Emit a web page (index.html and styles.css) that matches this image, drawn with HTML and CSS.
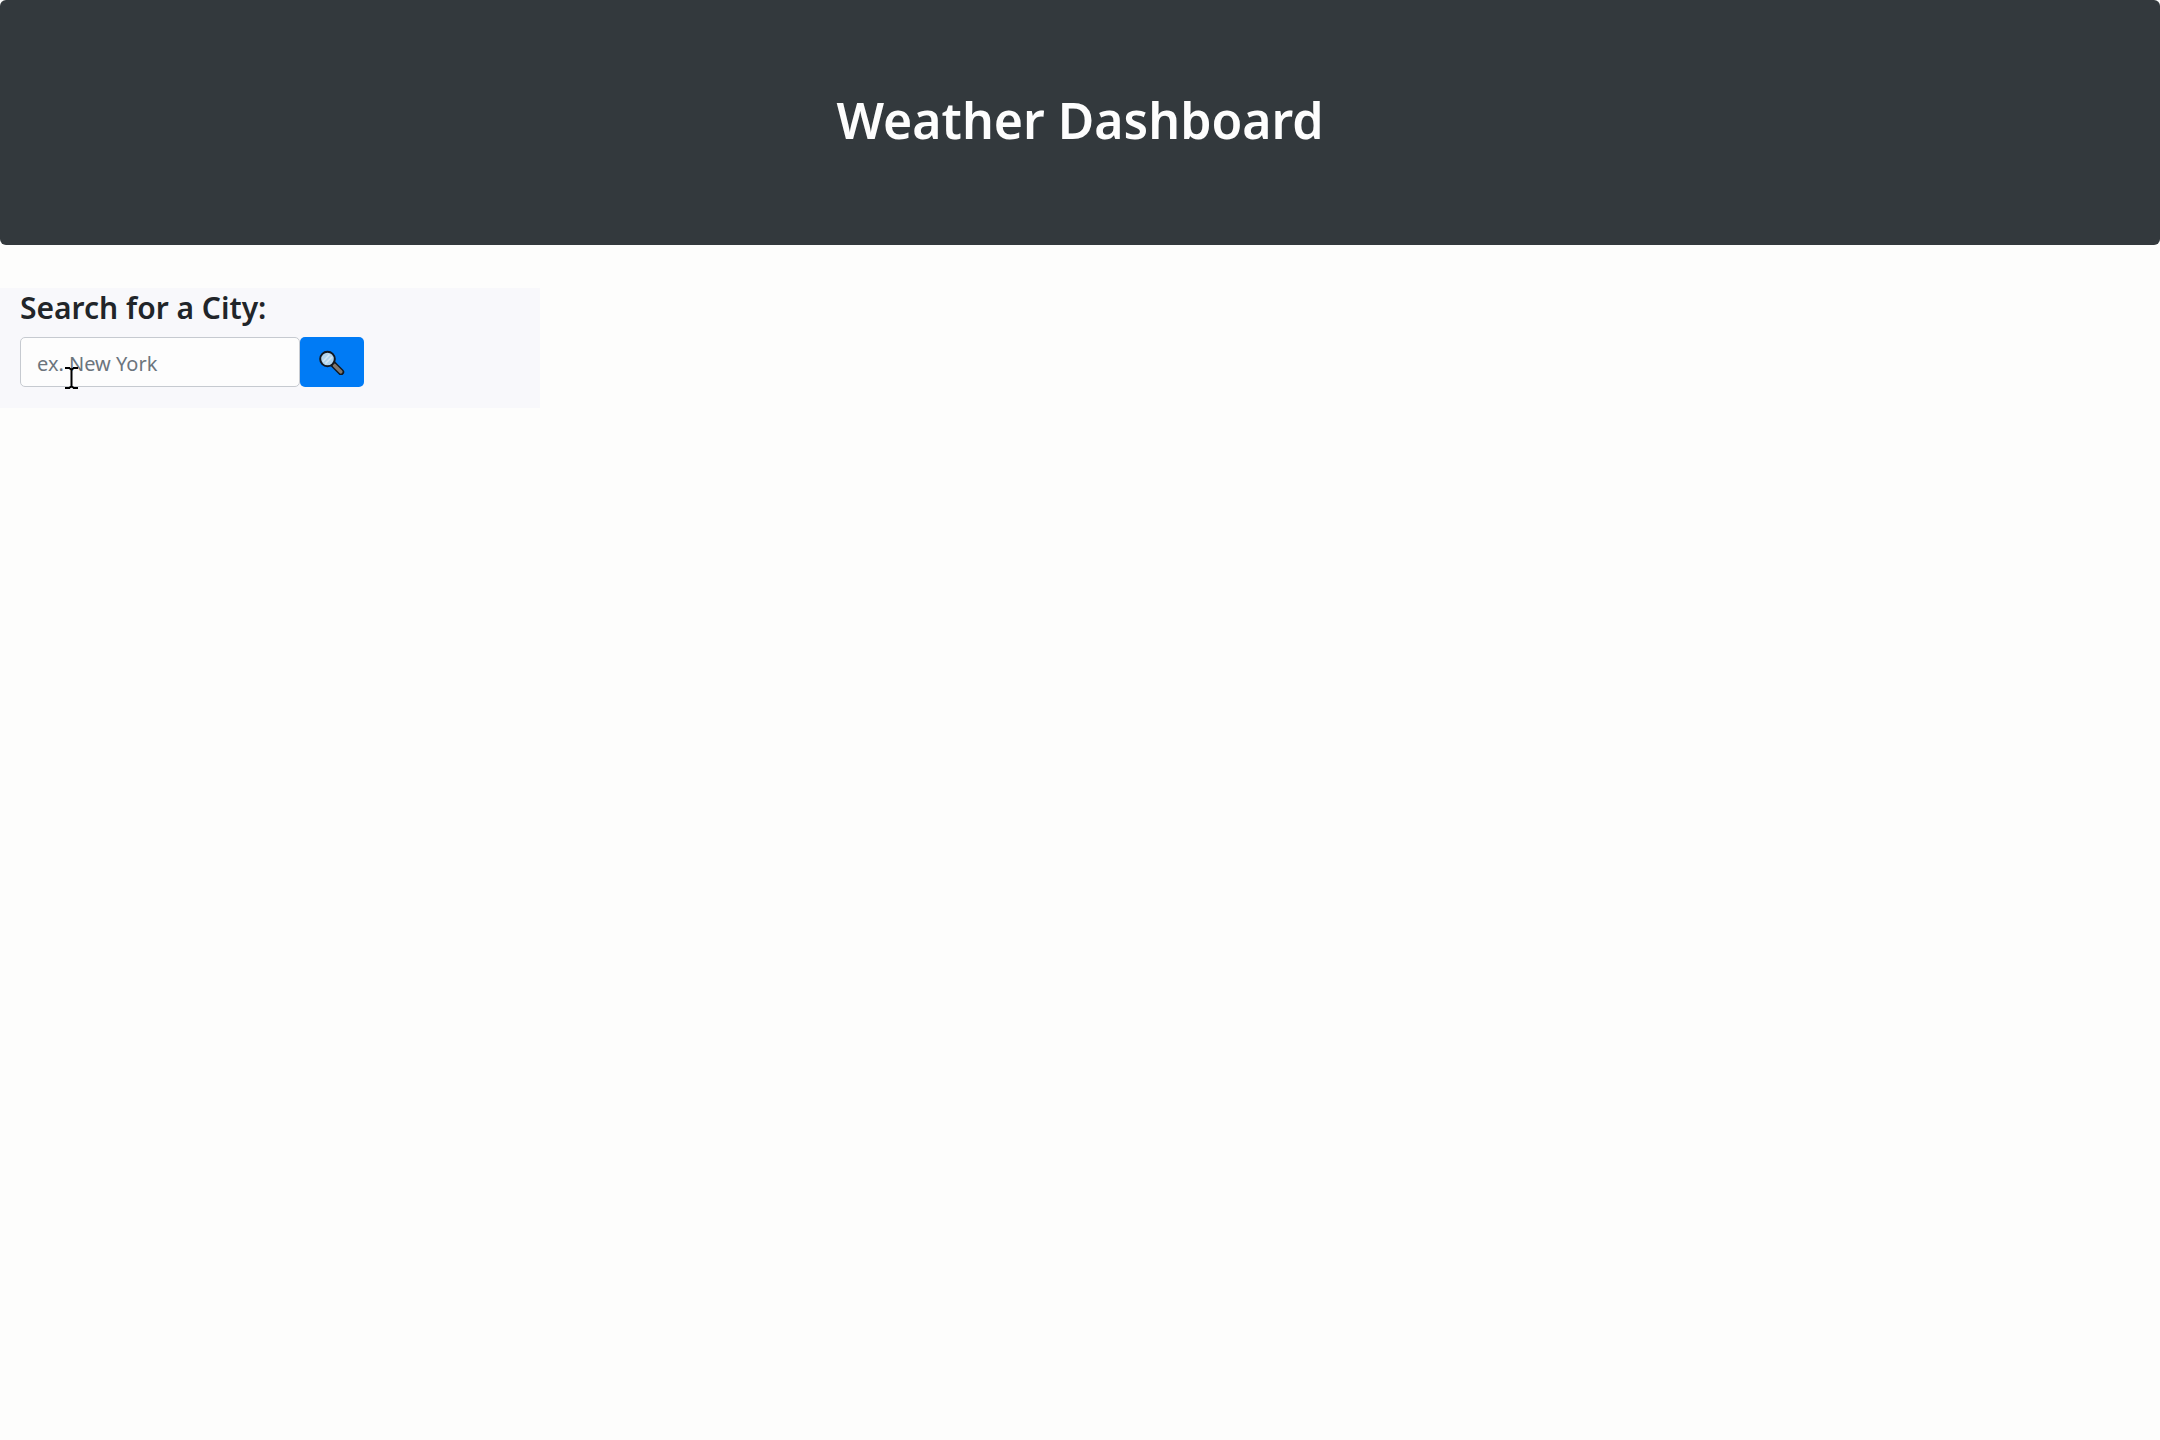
FILE: index.html
```html
<!DOCTYPE html>
<html lang="en">
<head>
<meta charset="utf-8">
<meta name="viewport" content="width=device-width, initial-scale=1">
<title>Weather Dashboard</title>
<link rel="stylesheet" href="styles.css">
</head>
<body>
<header class="hero">
  <h1 class="hero-title">Weather Dashboard</h1>
</header>
<main class="layout">
  <form class="search">
    <label class="search-label" for="city">Search for a City:</label>
    <div class="search-row">
      <input class="search-input" id="city" type="text" placeholder="ex. New York">
      <button class="search-button" type="button" aria-label="Search">
        <svg class="search-icon" viewBox="0 0 26 26" aria-hidden="true">
          <path d="M14.5 15.5 22 23" stroke="#111820" stroke-width="6.4" stroke-linecap="round"/>
          <path d="M15.5 16.5 21.8 22.8" stroke="#80776d" stroke-width="3.6" stroke-linecap="round"/>
          <circle cx="8.5" cy="10" r="7.3" fill="#b0d4ed" stroke="#111820" stroke-width="2"/>
          <path d="M4 12.5 10.5 5.5M6.5 14.5 13 8" stroke="#d3e7f3" stroke-width="1.5"/>
        </svg>
      </button>
      <svg class="cursor" viewBox="0 0 13 22" aria-hidden="true">
        <path d="M0 1H5M8 1H13M0 21H5M8 21H13M4 1 6.5 2.5 9 1M4 21 6.5 19.5 9 21M6.5 2V20" stroke="#000" stroke-width="2" fill="none"/>
      </svg>
    </div>
  </form>
</main>
</body>
</html>
```
FILE: styles.css
```css
* {
  box-sizing: border-box;
}

body {
  margin: 0;
  background: #fdfdfc;
  color: #212529;
  font-family: "Noto Sans", "Open Sans", sans-serif;
}

.hero {
  padding: 88px 20px 93px;
  border-radius: 6px;
  background: #33393d;
  color: #fdfdfd;
  text-align: center;
}

.hero-title {
  margin: 0;
  font-size: 50px;
  font-weight: 600;
  line-height: 64px;
}

.layout {
  display: flex;
  margin-top: 43px;
}

.search {
  width: 25%;
  padding: 0 20px 21px;
  background: #f8f8fb;
}

.search-label {
  display: block;
  padding-bottom: 9px;
  font-size: 30px;
  font-weight: 600;
  line-height: 40px;
}

.search-row {
  position: relative;
  display: flex;
}

.search-input {
  width: 56%;
  height: 50px;
  padding: 9px 16px 7px;
  border: 1px solid #c6cad0;
  border-radius: 5px;
  background: #fdfdfd;
  color: #495057;
  font: inherit;
  font-size: 20px;
}

.search-input::placeholder {
  color: #6c757d;
  opacity: 1;
}

.search-button {
  display: grid;
  place-items: center;
  width: 64px;
  padding: 0;
  border: 0;
  border-radius: 5px;
  background: #007bf5;
}

.search-icon {
  width: 26px;
  height: 26px;
}

/* Text pointer resting over the city field */
.cursor {
  position: absolute;
  top: 30px;
  left: 45px;
  width: 13px;
  height: 22px;
}
```
